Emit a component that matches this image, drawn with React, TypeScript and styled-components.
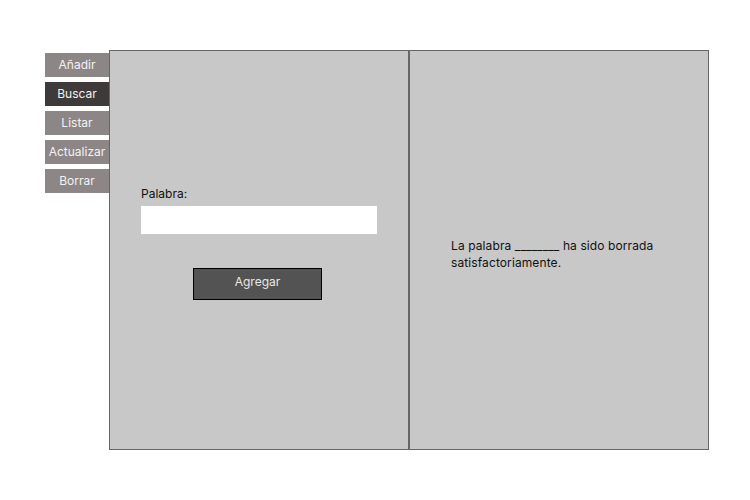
import styled, { createGlobalStyle } from "styled-components";

const GlobalStyle = createGlobalStyle`
  body {
    margin: 0;
    background: #ffffff;
    font-family: Inter, "Noto Sans", sans-serif;
  }
`;

const menu = ["Añadir", "Buscar", "Listar", "Actualizar", "Borrar"];

const App = () => {
  return (
    <>
      <GlobalStyle />
      <Page>
        <Sidebar>
          {menu.map((item) => (
            <MenuButton key={item} $active={item === "Buscar"}>
              {item}
            </MenuButton>
          ))}
        </Sidebar>
        <Panel>
          <Form>
            <Label>Palabra:</Label>
            <Input type="text" />
            <AddButton>Agregar</AddButton>
          </Form>
        </Panel>
        <Panel>
          <Message>
            La palabra ________ ha sido borrada
            <br />
            satisfactoriamente.
          </Message>
        </Panel>
      </Page>
    </>
  );
};

export default App;

const Page = styled.div`
  display: flex;
  padding: 50px 0 0 45px;
`;

const Sidebar = styled.div`
  display: flex;
  flex-direction: column;
  gap: 5px;
  width: 64px;
  padding-top: 3px;
`;

const MenuButton = styled.button<{ $active?: boolean }>`
  height: 24px;
  width: 64px;
  border: none;
  padding: 0 0 1px;
  background: ${(p) => (p.$active ? "#3e3a3a" : "#8d8686")};
  color: #f2f2f2;
  font-family: Inter, "Noto Sans", sans-serif;
  font-size: 12px;
  cursor: pointer;
`;

const Panel = styled.div`
  box-sizing: border-box;
  width: 300px;
  height: 400px;
  background: #c8c8c8;
  border: 1px solid #666666;
  display: flex;
  flex-direction: column;
`;

const Form = styled.div`
  display: flex;
  flex-direction: column;
  padding: 135px 0 0 31px;
`;

const Label = styled.label`
  font-size: 12px;
  color: #111;
  line-height: 16px;
`;

const Input = styled.input`
  box-sizing: border-box;
  margin-top: 4px;
  width: 236px;
  height: 28px;
  border: none;
  background: #ffffff;
  outline: none;
`;

const AddButton = styled.button`
  box-sizing: border-box;
  margin: 34px 0 0 52px;
  width: 129px;
  height: 32px;
  background: #535353;
  border: 1px solid #000000;
  color: #e8e8e8;
  font-family: Inter, "Noto Sans", sans-serif;
  font-size: 12px;
  padding: 0 0 5px;
`;

const Message = styled.p`
  margin: 186px 0 0 41px;
  font-size: 12px;
  line-height: 17px;
  color: #111;
  letter-spacing: 0.1px;
`;
